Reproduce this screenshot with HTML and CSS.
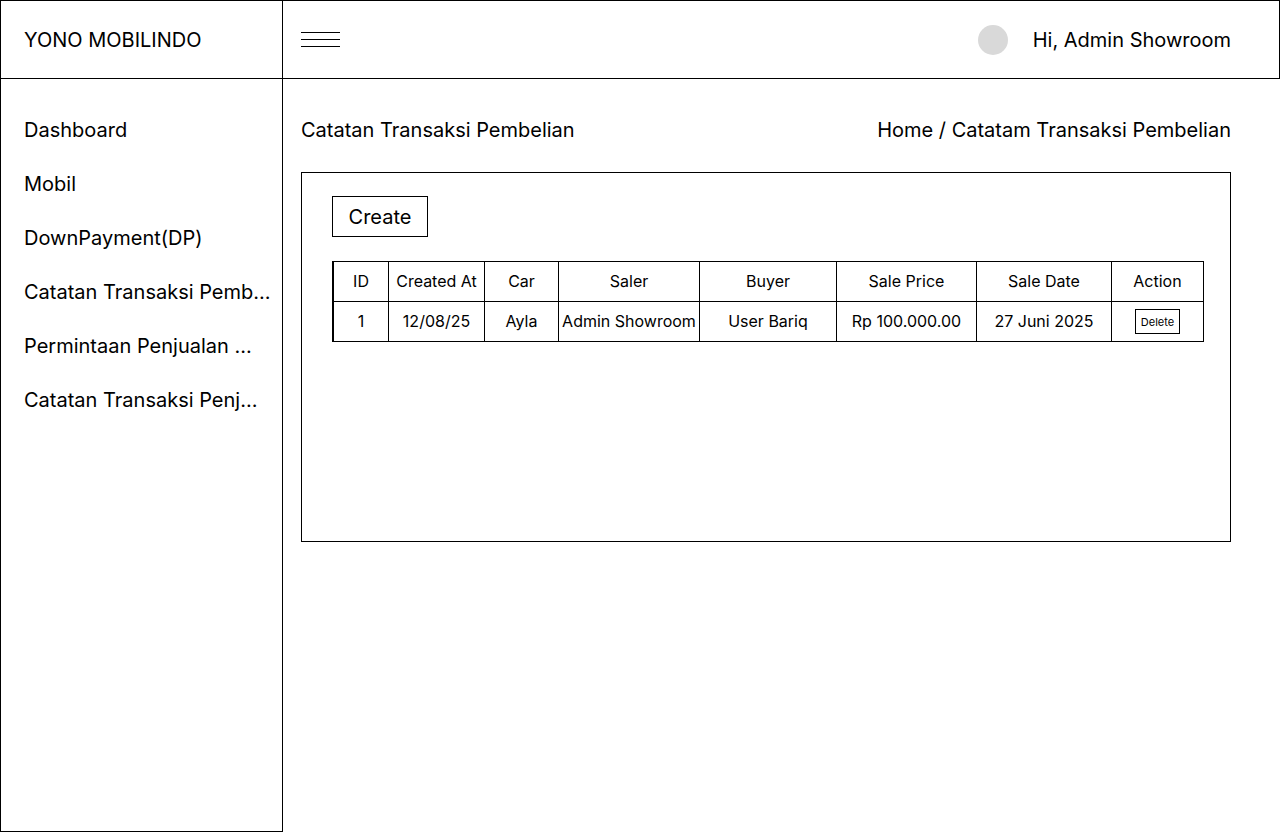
FILE: index.html
```html
<!DOCTYPE html>
<html lang="id">
<head>
<meta charset="utf-8">
<title>Catatan Transaksi Pembelian</title>
<link rel="stylesheet" href="styles.css">
</head>
<body>
<div class="app">
  <header class="topbar">
    <div class="brand">YONO MOBILINDO</div>
    <div class="topbar-main">
      <button class="burger" aria-label="Menu">
        <span></span><span></span><span></span>
      </button>
      <div class="user">
        <span class="avatar"></span>
        <span class="greet">Hi, Admin Showroom</span>
      </div>
    </div>
  </header>
  <div class="body-row">
    <aside class="sidebar">
      <nav class="nav">
        <a class="nav-item">Dashboard</a>
        <a class="nav-item">Mobil</a>
        <a class="nav-item">DownPayment(DP)</a>
        <a class="nav-item">Catatan Transaksi Pemb...</a>
        <a class="nav-item">Permintaan Penjualan ...</a>
        <a class="nav-item">Catatan Transaksi Penj...</a>
      </nav>
    </aside>
    <main class="content">
      <div class="page-head">
        <h1 class="page-title">Catatan Transaksi Pembelian</h1>
        <div class="crumbs">Home / Catatam Transaksi Pembelian</div>
      </div>
      <section class="card">
        <button class="btn-create">Create</button>
        <div class="table" role="table">
          <div class="cell th">ID</div>
          <div class="cell th">Created At</div>
          <div class="cell th">Car</div>
          <div class="cell th">Saler</div>
          <div class="cell th">Buyer</div>
          <div class="cell th">Sale Price</div>
          <div class="cell th">Sale Date</div>
          <div class="cell th">Action</div>
          <div class="cell td">1</div>
          <div class="cell td">12/08/25</div>
          <div class="cell td">Ayla</div>
          <div class="cell td">Admin Showroom</div>
          <div class="cell td">User Bariq</div>
          <div class="cell td">Rp 100.000.00</div>
          <div class="cell td">27 Juni 2025</div>
          <div class="cell td"><button class="btn-delete">Delete</button></div>
        </div>
      </section>
    </main>
  </div>
</div>
</body>
</html>
```

FILE: styles.css
```css
* {
  box-sizing: border-box;
}

html, body {
  margin: 0;
  padding: 0;
  background: #fff;
}

body {
  font-family: Inter, "Noto Sans", Arial, sans-serif;
  color: #000;
  font-weight: 400;
}

.app {
  width: 1280px;
  height: 832px;
  display: flex;
  flex-direction: column;
}

.topbar {
  height: 79px;
  border: 1px solid #000;
  display: flex;
  flex: none;
}

.brand {
  width: 282px;
  border-right: 1px solid #000;
  padding-left: 23px;
  display: flex;
  align-items: center;
  font-size: 20px;
  line-height: 24px;
  padding-top: 1px;
}

.topbar-main {
  flex: 1;
  display: flex;
  align-items: center;
  justify-content: space-between;
  padding: 0 48px 0 18px;
}

.burger {
  width: 39px;
  height: 15px;
  padding: 0;
  border: 0;
  background: none;
  display: flex;
  flex-direction: column;
  justify-content: space-between;
}

.burger span {
  display: block;
  height: 1px;
  width: 100%;
  background: #000;
}

.user {
  display: flex;
  align-items: center;
  gap: 25px;
}

.avatar {
  width: 30px;
  height: 30px;
  border-radius: 50%;
  background: #d9d9d9;
}

.greet {
  font-size: 20px;
  line-height: 24px;
}

.body-row {
  flex: 1;
  display: flex;
  min-height: 0;
}

.sidebar {
  width: 283px;
  flex: none;
  border: 1px solid #000;
  border-top: 0;
  padding: 39px 0 0 23px;
}

.nav {
  display: flex;
  flex-direction: column;
  gap: 30px;
}

.nav-item {
  font-size: 20px;
  line-height: 24px;
  white-space: nowrap;
  color: #000;
  text-decoration: none;
}

.content {
  flex: 1;
  padding: 39px 49px 0 18px;
}

.page-head {
  display: flex;
  justify-content: space-between;
  align-items: center;
  height: 24px;
}

.page-title {
  margin: 0;
  font-size: 20px;
  font-weight: 400;
  line-height: 24px;
}

.crumbs {
  font-size: 20px;
  line-height: 24px;
}

.card {
  margin-top: 30px;
  width: 930px;
  height: 370px;
  border: 1px solid #000;
  padding: 23px 0 0 30px;
}

.btn-create {
  display: block;
  width: 96px;
  height: 41px;
  border: 1px solid #000;
  background: #fff;
  font-family: inherit;
  font-size: 20px;
  line-height: 24px;
  color: #000;
  padding: 0;
}

.table {
  margin-top: 24px;
  display: grid;
  grid-template-columns: 55px 96px 74px 141px 137px 140px 135px 92px;
  grid-auto-rows: 40px;
  width: 872px;
  border-top: 1px solid #000;
  border-left: 2px solid #000;
}

.cell {
  border-right: 1px solid #000;
  border-bottom: 1px solid #000;
  display: flex;
  align-items: center;
  justify-content: center;
  font-size: 16px;
  line-height: 20px;
  white-space: nowrap;
  padding-bottom: 2px;
}

.btn-delete {
  width: 45px;
  height: 25px;
  border: 1px solid #000;
  background: #fff;
  font-family: inherit;
  font-size: 11px;
  color: #000;
  padding: 0;
  margin-top: 2px;
}
```
